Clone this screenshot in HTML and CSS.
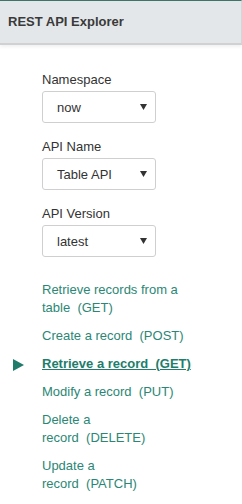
FILE: index.html
```html
<!DOCTYPE html>
<html lang="en">
<head>
    <meta charset="UTF-8">
    <meta name="viewport" content="width=device-width, initial-scale=1.0">
    <title>REST API Explorer</title>
    <link rel="stylesheet" href="styles.css">
</head>
<body>
    <div class="header">REST API Explorer</div>

    <div class="panel">
        <div class="field">
            <label for="namespace">Namespace</label>
            <div class="select-wrap">
                <select id="namespace"><option>now</option></select>
                <svg class="caret" width="7" height="6" viewBox="0 0 7 6"><path d="M0 0H7L3.5 6Z" fill="#333"/></svg>
            </div>
        </div>

        <div class="field">
            <label for="api-name">API Name</label>
            <div class="select-wrap">
                <select id="api-name"><option>Table API</option></select>
                <svg class="caret" width="7" height="6" viewBox="0 0 7 6"><path d="M0 0H7L3.5 6Z" fill="#333"/></svg>
            </div>
        </div>

        <div class="field">
            <label for="api-version">API Version</label>
            <div class="select-wrap">
                <select id="api-version"><option>latest</option></select>
                <svg class="caret" width="7" height="6" viewBox="0 0 7 6"><path d="M0 0H7L3.5 6Z" fill="#333"/></svg>
            </div>
        </div>

        <ul class="methods">
            <li><a href="#">Retrieve records from a<br>table&nbsp; (GET)</a></li>
            <li><a href="#">Create a record&nbsp; (POST)</a></li>
            <li class="active">
                <svg class="pointer" width="11" height="12" viewBox="0 0 11 12"><path d="M0 0L11 6L0 12Z" fill="#1f7c6b"/></svg>
                <a href="#">Retrieve a record&nbsp; (GET)</a>
            </li>
            <li><a href="#">Modify a record&nbsp; (PUT)</a></li>
            <li><a href="#">Delete a<br>record&nbsp; (DELETE)</a></li>
            <li><a href="#">Update a<br>record&nbsp; (PATCH)</a></li>
        </ul>
    </div>
</body>
</html>
```

FILE: styles.css
```css
body {
    font-family: 'Liberation Sans', Arial, sans-serif;
    font-size: 13px;
    color: #333;
    background: white;
    margin: 0;
}
.header {
    background: #e4e7ea;
    border-top: 1px solid #3f7565;
    border-right: 1px solid #d3d6d9;
    border-bottom: 2px solid #cfd1d3;
    box-shadow: 0 2px 3px rgba(0, 0, 0, 0.06);
    height: 42px;
    line-height: 42px;
    padding-left: 8px;
    font-weight: bold;
    color: #3a3a3a;
}
.panel {
    padding: 25px 0 0 42px;
}
.field {
    margin-bottom: 14px;
}
.field label {
    display: block;
    line-height: 20px;
    margin-bottom: 1px;
}
.select-wrap {
    position: relative;
    width: 114px;
}
.select-wrap select {
    appearance: none;
    -webkit-appearance: none;
    width: 114px;
    height: 32px;
    padding: 0 0 0 14px;
    border: 1px solid #cfcfcf;
    border-radius: 3px;
    background: white;
    font-family: inherit;
    font-size: 13px;
    color: #333;
}
.caret {
    position: absolute;
    right: 9px;
    top: 13px;
}
.methods {
    list-style: none;
    margin: 0;
    padding: 10px 0 0 0;
}
.methods li {
    position: relative;
    line-height: 18px;
    margin-bottom: 10px;
    white-space: nowrap;
}
.methods a {
    color: #2b8775;
    text-decoration: none;
}
.methods .active a {
    font-weight: bold;
    text-decoration: underline;
    color: #217d6b;
}
.pointer {
    position: absolute;
    left: -29px;
    top: 4px;
}
```
